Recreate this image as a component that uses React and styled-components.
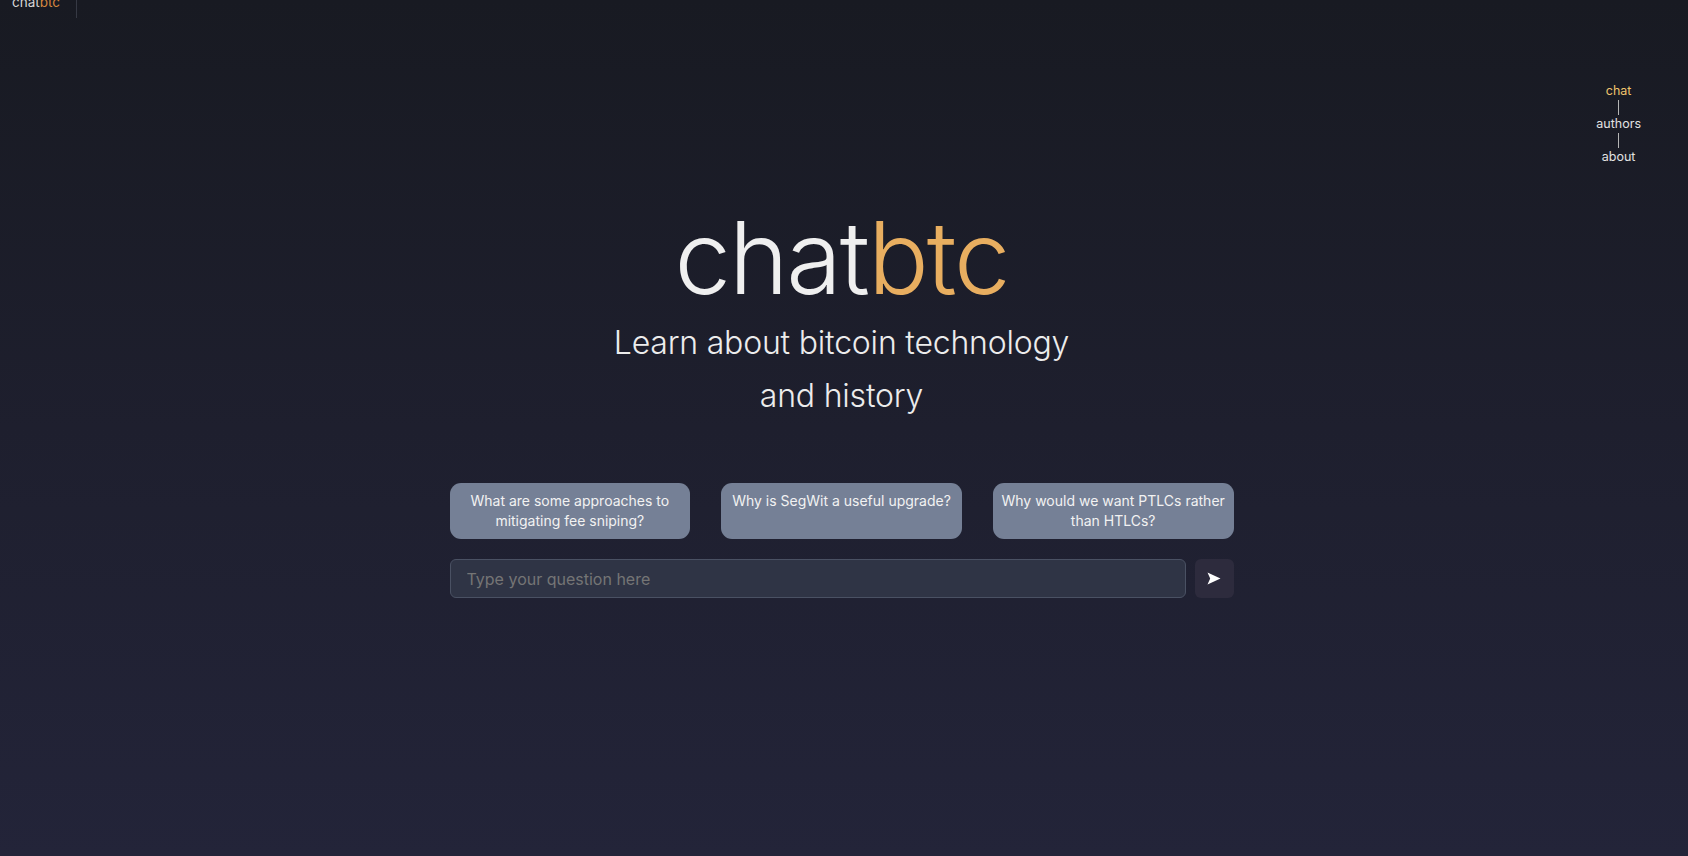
import styled, { createGlobalStyle } from "styled-components";

const GlobalStyle = createGlobalStyle`
    * { box-sizing: border-box; }
    html, body { margin: 0; padding: 0; }
    body {
        font-family: Inter, "Noto Sans", "Liberation Sans", sans-serif;
        background: linear-gradient(180deg, #181a22 0%, #1e1f2e 50%, #232439 100%);
        min-height: 100vh;
        color: #eeeeee;
        overflow: hidden;
    }
`;

const suggestions = [
    "What are some approaches to mitigating fee sniping?",
    "Why is SegWit a useful upgrade?",
    "Why would we want PTLCs rather than HTLCs?",
];

const navItems = ["chat", "authors", "about"];

export default function App() {
    return (
        <Page>
            <GlobalStyle />
            <Header>
                <SmallLogo>chat<span>btc</span></SmallLogo>
                <Divider />
            </Header>

            <Body>
                <div />
                <Main>
                    <Title>chat<span>btc</span></Title>
                    <Subtitle>Learn about bitcoin technology<br />and history</Subtitle>

                    <Suggestions>
                        {suggestions.map((s) => (
                            <SuggestionButton key={s}>{s}</SuggestionButton>
                        ))}
                    </Suggestions>

                    <InputRow>
                        <QuestionInput placeholder="Type your question here" />
                        <SendButton aria-label="send">
                            <svg width="14" height="13" viewBox="0 0 14 13">
                                <path d="M0.5 0.5 L13.5 6.5 L0.5 12.5 L3.2 6.5 Z" fill="#ffffff" />
                            </svg>
                        </SendButton>
                    </InputRow>
                </Main>
                <SideNav>
                    {navItems.map((item, i) => (
                        <NavGroup key={item}>
                            {i > 0 && <NavLine />}
                            <NavItem active={i === 0}>{item}</NavItem>
                        </NavGroup>
                    ))}
                </SideNav>
            </Body>
        </Page>
    );
}

const Page = styled.div`
    width: 100%;
    min-height: 100vh;
    display: flex;
    flex-direction: column;
`

const Header = styled.div`
    height: 32px;
    margin-top: -14px;
    padding-left: 12px;
    display: flex;
    align-items: center;
    gap: 16px;
`

const SmallLogo = styled.div`
    font-size: 13.5px;
    color: #d6d6d6;

    span{
        color: #d4863e;
    }
`

const Divider = styled.div`
    width: 1px;
    height: 100%;
    background-color: #363944;
`

const Body = styled.div`
    display: grid;
    grid-template-columns: 1fr 784px 1fr;
    padding-right: 5px;
`

const Main = styled.div`
    display: flex;
    flex-direction: column;
    align-items: center;
    padding-top: 189px;
`

const Title = styled.h1`
    margin: 0;
    font-size: 101px;
    font-weight: 300;
    line-height: 100px;
    letter-spacing: -2px;
    color: #efefef;

    span{
        color: #e8ae60;
    }
`

const Subtitle = styled.h2`
    margin: 9px 0 0 0;
    font-size: 32px;
    font-weight: 300;
    line-height: 53px;
    letter-spacing: -0.2px;
    text-align: center;
    color: #ececec;
`

const Suggestions = styled.div`
    width: 100%;
    margin-top: 61px;
    display: grid;
    grid-template-columns: repeat(3, 1fr);
    column-gap: 31px;
`

const SuggestionButton = styled.button`
    height: 56px;
    padding: 8px 6px;
    border: none;
    border-radius: 11px;
    background-color: #758096;
    color: #f2f2f2;
    font-family: Inter, "Noto Sans", sans-serif;
    font-size: 14px;
    line-height: 20px;
    text-align: center;
    display: flex;
    align-items: flex-start;
    justify-content: center;
`

const InputRow = styled.div`
    width: 100%;
    margin-top: 20px;
    display: flex;
    gap: 9px;
`

const QuestionInput = styled.input`
    flex: 1;
    height: 39px;
    padding: 0 16px;
    border: 1px solid #4a5163;
    border-radius: 6px;
    background-color: #2f3445;
    color: #eeeeee;
    font-family: Inter, "Noto Sans", sans-serif;
    font-size: 16px;
    outline: none;

    ::placeholder{
        color: #6c7383;
    }
`

const SendButton = styled.button`
    width: 39px;
    height: 39px;
    border: none;
    border-radius: 6px;
    background-color: #2d2b3d;
    display: flex;
    align-items: center;
    justify-content: center;
    padding: 0;
`

const SideNav = styled.nav`
    justify-self: end;
    margin-right: 42px;
    padding-top: 65px;
    display: flex;
    flex-direction: column;
    align-items: center;
`

const NavGroup = styled.div`
    display: flex;
    flex-direction: column;
    align-items: center;
`

const NavLine = styled.div`
    width: 1px;
    height: 15px;
    margin: 2px 0 1px;
    background-color: #b5b5b5;
`

const NavItem = styled.div`
    font-size: 12.5px;
    line-height: 15px;
    color: ${(props) => (props.active ? "#f0c46c" : "#e2e2e2")};
`
